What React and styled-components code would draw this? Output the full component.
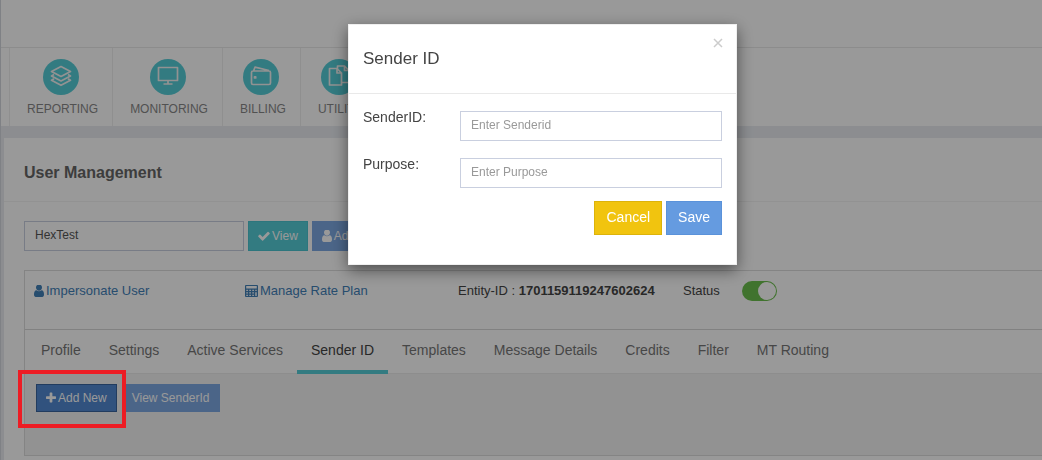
import React from 'react';
import styled, { createGlobalStyle } from 'styled-components';

const Global = createGlobalStyle`
  *, *::before, *::after { box-sizing: border-box; }
  body {
    margin: 0;
    background: #e9ecf1;
    color: #444;
    font: 13px/20px "Liberation Sans", Arial, sans-serif;
    overflow-x: hidden;
  }
  button, input { font-family: inherit; margin: 0; }
`;

const Page = styled.div`
  min-height: 100vh;
  border-left: 1px solid #d4d7de;
  display: flex;
  flex-direction: column;
`;

const TopBar = styled.header`
  height: 48px;
  background: #fff;
  border-bottom: 1px solid #e9e9e9;
`;

const Nav = styled.nav`
  display: flex;
  height: 78px;
  padding-left: 8px;
  background: #fff;
`;

const NavItem = styled.a`
  display: flex;
  flex-direction: column;
  align-items: center;
  gap: 6px;
  padding: 11px 14px 0;
  border-left: 1px solid #eee;
  color: #888;
  font-size: 12px;
  line-height: 16px;
  text-decoration: none;
`;

const NavLabel = styled.span`
  padding-left: 3px;
`;

const NavCircle = styled.span`
  display: grid;
  place-items: center;
  width: 36px;
  height: 36px;
  border-radius: 50%;
  background: #55cdd7;
`;

const NavSvg = styled.svg`
  width: 24px;
  height: 24px;
  fill: none;
  stroke: #f4f4f4;
  stroke-width: 1.7;
  stroke-linejoin: round;
`;

const Card = styled.main`
  flex: 1;
  margin: 12px 0 0 3px;
  padding-bottom: 4px;
  background: #fff;
`;

const CardTitle = styled.h1`
  margin: 0;
  padding: 25px 20px 18px;
  border-bottom: 1px solid #f3f3f3;
  color: #666;
  font-size: 16px;
  line-height: 20px;
`;

const CardBody = styled.div`
  padding: 19px 0 0 20px;
`;

const SearchRow = styled.form`
  display: flex;
  gap: 4px;
  margin-bottom: 19px;
`;

const TextInput = styled.input`
  width: ${(p) => p.$width || '100%'};
  height: 30px;
  padding: 0 10px 2px;
  border: 1px solid #c9cfdf;
  border-radius: 0;
  background: #fff;
  color: #555;
  font-size: 12px;
  outline: none;
  &::placeholder { color: #999; opacity: 1; }
`;

const tones = {
  teal: ['#55cdd7', '#4bc5d0'],
  blue: ['#659be0', '#5a92da'],
  faded: ['#7ea9e3', '#7ea9e3'],
  dark: ['#5289d2', '#39649f'],
  yellow: ['#f1c40f', '#dcb30b'],
};

const Button = styled.button`
  display: inline-flex;
  align-items: center;
  justify-content: center;
  gap: 2px;
  flex: none;
  height: ${(p) => (p.$large ? '34px' : p.$small ? '28px' : '30px')};
  padding: ${(p) => (p.$large ? '0 11px 2px' : '0 9px 1px')};
  border: 1px solid ${(p) => tones[p.$tone][1]};
  background: ${(p) => tones[p.$tone][0]};
  color: #fff;
  font-size: ${(p) => (p.$large ? '14px' : '12px')};
  white-space: nowrap;
`;

const Glyph = styled.svg`
  width: ${(p) => p.$w || 12}px;
  height: 12px;
  flex: none;
  fill: currentColor;
`;

const Panel = styled.section`
  border: 1px solid #ddd;
  border-right: 0;
`;

const InfoRow = styled.div`
  display: grid;
  grid-template-columns: 211px 213px 225px 1fr;
  height: 59px;
  padding: 10px 9px 0;
  border-bottom: 1px solid #d8d8d8;
  white-space: nowrap;
`;

const InfoLink = styled.a`
  display: flex;
  align-items: center;
  gap: 2px;
  height: 20px;
  color: #4280b8;
  text-decoration: none;
`;

const Status = styled.label`
  display: flex;
  align-items: center;
  gap: 22px;
  height: 20px;
`;

const Toggle = styled.input`
  appearance: none;
  width: 35px;
  height: 20px;
  margin: 0;
  padding: 1px;
  border-radius: 10px;
  background: #6cc04e;
  &::before {
    content: "";
    display: block;
    width: 18px;
    height: 18px;
    margin-left: 15px;
    border-radius: 50%;
    background: #fff;
  }
`;

const Tabs = styled.div`
  display: flex;
  height: 44px;
  padding-left: 2px;
  border-bottom: 1px solid #ececec;
`;

const Tab = styled.button`
  height: 44px;
  padding: 0 14px;
  border: 0;
  border-bottom: 4px solid ${(p) => (p.$active ? '#55cdd7' : 'transparent')};
  background: none;
  color: ${(p) => (p.$active ? '#444' : '#777')};
  font-size: 14px;
  white-space: nowrap;
`;

const TabPane = styled.div`
  display: flex;
  gap: 5px;
  height: 81px;
  padding: 10px 11px 0;
  background: #f3f3f3;
`;

const Highlighted = styled.div`
  position: relative;
  height: 28px;
  &::after {
    content: "";
    position: absolute;
    z-index: 20;
    inset: -14px -9px -16px -18px;
    border: 4px solid #ed1c24;
    pointer-events: none;
  }
`;

const Backdrop = styled.div`
  position: fixed;
  z-index: 10;
  inset: 0;
  display: flex;
  justify-content: center;
  align-items: flex-start;
  padding: 24px 0 0 43px;
  background: rgba(0, 0, 0, 0.4);
`;

const Dialog = styled.div`
  width: 100%;
  max-width: 389px;
  background: #fff;
  border: 1px solid #efefef;
  box-shadow: 0 5px 15px rgba(0, 0, 0, 0.5);
`;

const DialogHead = styled.div`
  display: flex;
  justify-content: space-between;
  padding: 13px 13px 23px 14px;
  border-bottom: 1px solid #e9e9e9;
`;

const DialogTitle = styled.h2`
  margin: 0;
  padding-top: 10px;
  font-size: 17px;
  font-weight: 400;
  line-height: 22px;
`;

const Close = styled.button`
  align-self: flex-start;
  display: flex;
  padding: 0;
  border: 0;
  background: none;
  color: #ccc;
`;

const DialogForm = styled.form`
  display: flex;
  flex-direction: column;
  gap: 17px;
  padding: 17px 14px 29px;
`;

const Field = styled.label`
  display: grid;
  grid-template-columns: 97px 1fr;
  font-size: 14px;
  line-height: 12px;
`;

const Actions = styled.div`
  display: flex;
  justify-content: flex-end;
  gap: 4px;
  margin-top: -4px;
`;

const UserGlyph = () => (
  <Glyph $w={10} viewBox="0 200 1280 1464" preserveAspectRatio="none" aria-hidden="true">
    <path d="M1280 1399q0 109-62.5 187t-150.5 78h-854q-88 0-150.5-78t-62.5-187q0-85 8.5-160.5t31.5-152 58.5-131 94-89 134.5-34.5q131 128 313 128t313-128q76 0 134.5 34.5t94 89 58.5 131 31.5 152 8.5 160.5zm-256-887q0 159-112.5 271.5t-271.5 112.5-271.5-112.5-112.5-271.5 112.5-271.5 271.5-112.5 271.5 112.5 112.5 271.5z" />
  </Glyph>
);

const CheckGlyph = () => (
  <Glyph viewBox="100 100 1600 1600" aria-hidden="true">
    <path d="M1671 566q0 40-28 68l-724 724-136 136q-28 28-68 28t-68-28l-136-136-362-362q-28-28-28-68t28-68l136-136q28-28 68-28t68 28l294 295 656-657q28-28 68-28t68 28l136 136q28 28 28 68z" />
  </Glyph>
);

const PlusGlyph = () => (
  <Glyph $w={10} viewBox="192 192 1408 1408" aria-hidden="true">
    <path d="M1600 736v192q0 40-28 68t-68 28h-416v416q0 40-28 68t-68 28h-192q-40 0-68-28t-28-68v-416h-416q-40 0-68-28t-28-68v-192q0-40 28-68t68-28h416v-416q0-40 28-68t68-28h192q40 0 68 28t28 68v416h416q40 0 68 28t28 68z" />
  </Glyph>
);

const CalculatorGlyph = () => (
  <Glyph $w={13} viewBox="0 0 13 13" preserveAspectRatio="none" aria-hidden="true">
    <path
      fillRule="evenodd"
      d="M1 0h11a1 1 0 0 1 1 1v11a1 1 0 0 1-1 1H1a1 1 0 0 1-1-1V1a1 1 0 0 1 1-1zM1.2 1.2v2.6h10.6V1.2zM1.3 5.2v1.4h1.6V5.2zM4.3 5.2v1.4h1.6V5.2zM7.3 5.2v1.4h1.6V5.2zM10.3 5.2v1.4h1.4V5.2zM1.3 7.9v1.4h1.6V7.9zM4.3 7.9v1.4h1.6V7.9zM7.3 7.9v1.4h1.6V7.9zM10.3 7.9v3.9h1.4V7.9zM1.3 10.5v1.3h1.6v-1.3zM4.3 10.5v1.3h1.6v-1.3zM7.3 10.5v1.3h1.6v-1.3z"
    />
  </Glyph>
);

const navItems = [
  ['REPORTING', 'M12 1.5l9.500 5-9.500 5-9.500-5zM5 9.500l-2.500 1.500 9.500 5 9.500-5-2.500-1.500M5 13.800l-2.500 1.500 9.500 5 9.500-5-2.500-1.500'],
  ['MONITORING', 'M2.500 2.500h19v13h-19zM12 15.500v3M7.500 19h9'],
  ['BILLING', 'M4 6h16a1.500 1.500 0 0 1 1.500 1.500v10.500a1.500 1.500 0 0 1-1.500 1.500H4a1.500 1.500 0 0 1-1.500-1.500V7.500A1.500 1.500 0 0 1 4 6zM4.500 6L6 2.200l14 3.300M5.500 11.800h1.200v1.200H5.500z'],
  ['UTILITY', 'M2.500 3.500h7.500l4.500 4.500v12H2.500zM10 3.500V8h4.500M10.500 3.500V1h7l4.500 4.500V17.500h-7.500M17.500 1v4.500H22'],
];

const tabs = ['Profile', 'Settings', 'Active Services', 'Sender ID', 'Templates', 'Message Details', 'Credits', 'Filter', 'MT Routing'];

export default function App() {
  return (
    <>
      <Global />
      <Page>
        <TopBar />
        <Nav>
          {navItems.map(([name, d]) => (
            <NavItem href="#" key={name}>
              <NavCircle>
                <NavSvg viewBox="0 0 24 24" aria-hidden="true"><path d={d} /></NavSvg>
              </NavCircle>
              <NavLabel>{name}</NavLabel>
            </NavItem>
          ))}
        </Nav>
        <Card>
          <CardTitle>User Management</CardTitle>
          <CardBody>
            <SearchRow>
              <TextInput $width="220px" aria-label="User" defaultValue="HexTest" />
              <Button type="button" $tone="teal"><CheckGlyph />View</Button>
              <Button type="button" $tone="faded"><UserGlyph />Add</Button>
            </SearchRow>
            <Panel>
              <InfoRow>
                <InfoLink href="#"><UserGlyph />Impersonate User</InfoLink>
                <InfoLink href="#"><CalculatorGlyph />Manage Rate Plan</InfoLink>
                <span>Entity-ID : <b>1701159119247602624</b></span>
                <Status>
                  Status
                  <Toggle type="checkbox" role="switch" defaultChecked />
                </Status>
              </InfoRow>
              <Tabs role="tablist">
                {tabs.map((name) => (
                  <Tab key={name} type="button" role="tab" aria-selected={name === 'Sender ID'} $active={name === 'Sender ID'}>
                    {name}
                  </Tab>
                ))}
              </Tabs>
              <TabPane role="tabpanel">
                <Highlighted>
                  <Button type="button" $small $tone="dark"><PlusGlyph />Add New</Button>
                </Highlighted>
                <Button type="button" $small $tone="faded">View SenderId</Button>
              </TabPane>
            </Panel>
          </CardBody>
        </Card>
      </Page>
      <Backdrop>
        <Dialog role="dialog" aria-modal="true" aria-labelledby="dialog-title">
          <DialogHead>
            <DialogTitle id="dialog-title">Sender ID</DialogTitle>
            <Close type="button" aria-label="Close">
              <svg width="10" height="10" viewBox="0 0 10 10" stroke="currentColor" strokeWidth="1.5">
                <path d="M1 1l8 8M9 1l-8 8" />
              </svg>
            </Close>
          </DialogHead>
          <DialogForm>
            <Field>SenderID:<TextInput placeholder="Enter Senderid" /></Field>
            <Field>Purpose:<TextInput placeholder="Enter Purpose" /></Field>
            <Actions>
              <Button type="button" $large $tone="yellow">Cancel</Button>
              <Button type="button" $large $tone="blue">Save</Button>
            </Actions>
          </DialogForm>
        </Dialog>
      </Backdrop>
    </>
  );
}
